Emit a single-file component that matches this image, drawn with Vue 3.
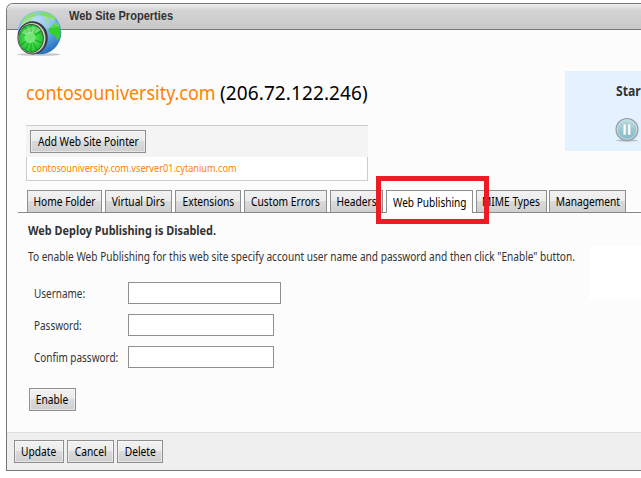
<script setup>
const tabs = [
  { label: 'Home Folder', cls: 'home' },
  { label: 'Virtual Dirs', cls: 'dirs' },
  { label: 'Extensions', cls: 'ext' },
  { label: 'Custom Errors', cls: 'errors' },
  { label: 'Headers', cls: 'headers' },
  { label: 'Web Publishing', cls: 'publishing', active: true },
  { label: 'MIME Types', cls: 'mime' },
  { label: 'Management', cls: 'management' },
]
const fields = [
  { label: 'Username:', cls: 'wide', type: 'text' },
  { label: 'Password:', cls: 'pw', type: 'password' },
  { label: 'Confim password:', cls: 'confirm', type: 'password' },
]
</script>

<template>
  <div class="page">
    <section class="panel">
      <header class="bar">
        <svg class="globe" width="48" height="48" viewBox="0 0 48 48">
          <defs>
            <radialGradient id="sea" cx="0.4" cy="0.2" r="0.85">
              <stop offset="0" stop-color="#a8d2f8" />
              <stop offset="0.5" stop-color="#6fb0ee" />
              <stop offset="1" stop-color="#1d68b8" />
            </radialGradient>
            <radialGradient id="dial" cx="0.5" cy="0.5" r="0.55">
              <stop offset="0" stop-color="#8af08a" />
              <stop offset="0.45" stop-color="#3fdc48" />
              <stop offset="1" stop-color="#22b82e" />
            </radialGradient>
          </defs>
          <ellipse cx="22" cy="44.500" rx="21.500" ry="1.300" fill="#999" opacity="0.55" />
          <circle cx="22.500" cy="22.500" r="21.800" fill="url(#sea)" />
          <path d="M4 13C7 7 11 4 16 2.500l5 1-2 3-4 2-3 4-4 1-3 4z" fill="#8fdc80" />
          <path d="M23 1.500c7 0 12 3 16 7l-3 3-3-4-2 1 1 4-3-2-2-4-5-2z" fill="#7fdd6c" />
          <path d="M32 18l5-5 4 1 2.500 5v7l-3 5-3-6-4-1-2-3z" fill="#35cf2d" />
          <path d="M28 12l4 1-1 2-3-1z" fill="#7fdd6c" />
          <path d="M1.500 18C9 3 34 1 43 16 30 20 16 18 1.500 24z" fill="#fff" opacity="0.2" />
          <ellipse cx="15.600" cy="27.800" rx="15.200" ry="16.600" fill="#38393b" />
          <ellipse cx="14.900" cy="28.200" rx="13.600" ry="15.300" fill="#d0d2d1" />
          <ellipse cx="14.200" cy="28.400" rx="12.600" ry="14.300" fill="#2a4a2d" />
          <ellipse cx="14" cy="28.400" rx="12" ry="13.700" fill="url(#dial)" />
          <path d="M14 15v27M3 23l22 10M4 35l20-14M8 17l12 23M20 17L8 40" stroke="#087d19" stroke-width="1.100" opacity="0.55" />
          <circle cx="13" cy="27.500" r="5.500" fill="#7bea7c" opacity="0.9" />
          <path d="M4 25c3-8 13-12 20-5-5 4-12 3-20 5z" fill="#d9ffd5" opacity="0.35" />
        </svg>
        <h1 class="title">Web Site Properties</h1>
      </header>

      <main class="body">
        <div class="top">
          <div class="site">
            <h2 class="name"><a class="domain">contosouniversity.com</a><span class="ip">(206.72.122.246)</span></h2>
            <div class="pointers">
              <div class="tools"><button class="btn add"><span>Add Web Site Pointer</span></button></div>
              <div class="pointer"><a>contosouniversity.com.vserver01.cytanium.com</a></div>
            </div>
          </div>
          <aside class="status">
            <div class="state">Star</div>
            <svg class="pause" width="24" height="25" viewBox="0 0 24 25">
              <defs>
                <linearGradient id="glass" x1="0" y1="0" x2="0" y2="1">
                  <stop offset="0" stop-color="#c0dfe3" />
                  <stop offset="0.5" stop-color="#9cc9d1" />
                  <stop offset="1" stop-color="#83bac5" />
                </linearGradient>
              </defs>
              <ellipse cx="12" cy="22.500" rx="11" ry="1.200" fill="#b4c0c8" />
              <circle cx="12" cy="11.500" r="10.900" fill="url(#glass)" stroke="#969fa3" stroke-width="1.300" />
              <circle cx="12" cy="11.500" r="9.800" fill="none" stroke="#d5e6e9" stroke-width="0.800" />
              <path d="M8.2 6h2.900v11H8.200zM12.800 6h2.900v11h-2.900z" fill="#fff" stroke="#8aaeb5" stroke-width="0.400" />
            </svg>
          </aside>
        </div>

        <nav class="tabs">
          <a v-for="t in tabs" :key="t.label" class="tab" :class="[t.cls, { active: t.active }]">
            <span>{{ t.label }}</span>
            <i v-if="t.active" class="marker"></i>
          </a>
        </nav>

        <div class="content">
          <div class="form">
            <p class="notice">Web Deploy Publishing is Disabled.</p>
            <p class="hint">To enable Web Publishing for this web site specify account user name and password and then click "Enable" button.</p>
            <div v-for="f in fields" :key="f.label" class="field">
              <label :class="f.cls"><span>{{ f.label }}</span></label>
              <input :type="f.type" :class="f.cls" />
            </div>
            <button class="btn enable"><span>Enable</span></button>
          </div>
          <div class="side"></div>
        </div>
      </main>

      <footer class="actions">
        <button class="btn update"><span>Update</span></button>
        <button class="btn cancel"><span>Cancel</span></button>
        <button class="btn delete"><span>Delete</span></button>
      </footer>
    </section>
  </div>
</template>

<style>
body { background: #fff; overflow: hidden; }
</style>

<style scoped>
.page { width: 641px; height: 478px; box-sizing: border-box; padding: 3px 0 0 6px; overflow: hidden; font-family: "Noto Sans", sans-serif; font-size: 12px; color: #333; }
.page * { box-sizing: border-box; }
.panel { height: 468px; display: flex; flex-direction: column; border: 1px solid #777; border-right: 0; border-radius: 7px 0 0 0; background: #fcfcfc; }
.bar { position: relative; height: 26px; flex: none; padding: 3px 0 0 62px; border-bottom: 1px solid #777; border-radius: 6px 0 0 0; background: linear-gradient(#f0f0f0, #d4d4d4 25%, #c8c8c8); }
.globe { position: absolute; left: 10px; top: 6px; }
.title { width: max-content; margin: 0; font: bold 12px/18px "Liberation Sans", sans-serif; color: #333; white-space: nowrap; transform: scaleX(0.92); transform-origin: 0 0; }
.body { flex: 1; display: flex; flex-direction: column; }
.top { display: flex; height: 160px; padding-left: 19px; }
.site { width: 342px; }
.name { display: flex; margin: 0; padding-top: 49px; height: 95px; font-size: 19px; line-height: 28px; font-weight: 400; white-space: nowrap; }
.domain { width: 194px; color: #ff8200; transform: scaleX(0.942); transform-origin: 0 0; }
.ip { color: #000; letter-spacing: 0.1px; }
.pointers { height: 56px; display: flex; flex-direction: column; }
.tools { height: 32px; padding: 4px; border-top: 1px solid #ccc; background: #f4f4f4; }
.pointer { flex: 1; padding-left: 5px; border: 1px solid #ccc; border-top: 0; background: #fff; color: #ff8200; font-size: 11px; line-height: 22px; white-space: nowrap; }
.pointer a { display: inline-block; transform: scaleX(0.832); transform-origin: 0 0; }
.status { width: 76px; height: 80px; margin: 41px 0 0 197px; padding: 9px 0 0 51px; background: #e4f2ff; }
.state { width: max-content; font-weight: 700; font-size: 14px; line-height: 22px; transform: scaleX(0.87); transform-origin: 0 0; }
.pause { display: block; margin: 16px 0 0 -1px; }

.btn { display: flex; align-items: center; justify-content: center; height: 23px; padding: 0; border: 1px solid #8e8f8f; background: linear-gradient(#f2f2f2, #ebebeb 48%, #dadada 50%, #cfcfcf); box-shadow: inset 0 0 0 1px rgba(255, 255, 255, 0.45); color: #000; font: 12px/16px "Noto Sans", sans-serif; white-space: nowrap; }
.btn span, .tab span { display: block; flex: none; transform: scaleX(0.85); }
.add { width: 116px; }
.enable { width: 47px; margin: 20px 0 0 1px; }
.update { width: 50px; }
.cancel { width: 47px; }
.delete { width: 46px; }

.tabs { display: flex; gap: 3px; height: 23px; margin-left: 11px; padding-left: 9px; border-bottom: 1px solid #888; }
.tab { position: relative; display: flex; align-items: center; justify-content: center; height: 22px; border: 1px solid #8e8f8f; border-bottom: 0; background: linear-gradient(#f2f2f2, #ebebeb 48%, #dadada 50%, #cfcfcf); color: #000; line-height: 16px; white-space: nowrap; }
.tab.active { height: 23px; background: #fff; padding-top: 1px; }
.tab.active span { transform: scaleX(0.84); }
.home { width: 75px; }
.dirs { width: 67px; }
.ext { width: 66px; }
.errors { width: 83px; }
.headers { width: 53px; }
.publishing { width: 87px; }
.mime { width: 71px; }
.management { width: 77px; margin-left: -1px; }
.marker { position: absolute; z-index: 2; left: -11px; top: -15px; width: 113px; height: 48px; border: 5px solid #ed1c24; }

.content { display: flex; padding-left: 21px; }
.form { width: 561px; flex: none; }
.notice { width: max-content; margin: 9px 0 0; font-weight: 700; line-height: 18px; white-space: nowrap; transform: scaleX(0.908); transform-origin: 0 0; }
.hint { width: max-content; margin: 8px 0 0; line-height: 18px; white-space: nowrap; transform: scaleX(0.842); transform-origin: 0 0; }
.field { display: flex; align-items: center; height: 22px; margin-top: 10px; padding-left: 6px; white-space: nowrap; }
.hint + .field { margin-top: 16px; }
.field label { width: 94px; flex: none; }
.field label span { display: inline-block; transform: scaleX(0.83); transform-origin: 0 0; }
.field input { height: 22px; width: 146px; padding: 0 4px; border: 1px solid #8e8f8f; border-radius: 0; background: #fff; }
.field input.wide { width: 153px; }
.side { flex: 1; height: 55px; margin-top: 33px; background: #fff; }
.actions { display: flex; gap: 3px; height: 38px; flex: none; padding: 7px 0 0 7px; border-top: 1px solid #ddd; background: #efefef; }
</style>
